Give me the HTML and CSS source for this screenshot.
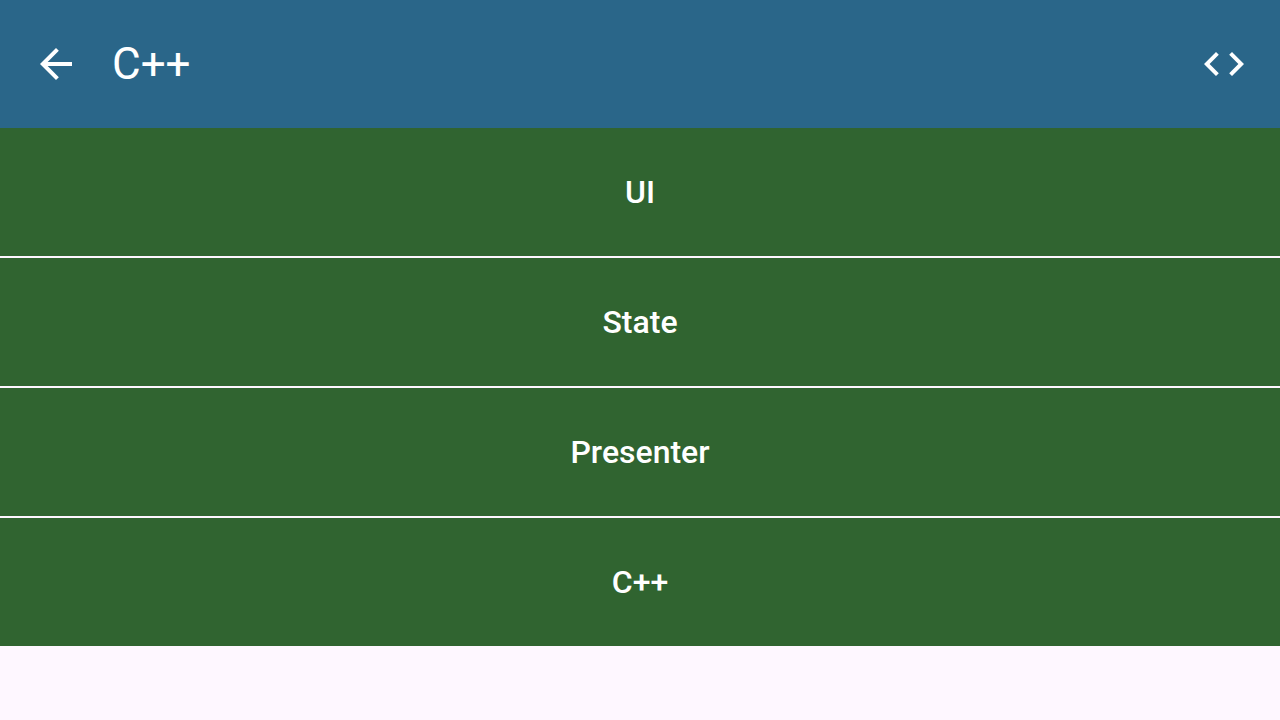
FILE: index.html
```html
<!DOCTYPE html>
<html lang="en">
<head>
<meta charset="utf-8">
<title>C++</title>
<link rel="stylesheet" href="styles.css">
</head>
<body>
<header class="app-bar">
  <button class="icon-button" type="button" aria-label="Back">
    <svg class="icon" viewBox="0 0 24 24"><path d="M20 11H7.83l5.59-5.59L12 4l-8 8 8 8 1.41-1.41L7.83 13H20v-2z"/></svg>
  </button>
  <h1 class="title">C++</h1>
  <button class="icon-button" type="button" aria-label="View code">
    <svg class="icon" viewBox="0 0 24 24"><path d="M9.4 16.6L4.8 12l4.6-4.6L8 6l-6 6 6 6 1.4-1.4zm5.2 0l4.6-4.6-4.6-4.6L16 6l6 6-6 6-1.4-1.4z"/></svg>
  </button>
</header>
<main class="menu">
  <button class="menu-item" type="button">UI</button>
  <button class="menu-item" type="button">State</button>
  <button class="menu-item" type="button">Presenter</button>
  <button class="menu-item" type="button">C++</button>
</main>
</body>
</html>
```
FILE: styles.css
```css
* {
  box-sizing: border-box;
}

body {
  margin: 0;
  background: #fef7ff;
  font-family: Roboto, sans-serif;
}

.app-bar {
  display: flex;
  align-items: center;
  min-height: 128px;
  padding: 16px 8px;
  background: #2a6689;
  color: #ffffff;
}

.icon-button {
  display: flex;
  align-items: center;
  justify-content: center;
  width: 96px;
  height: 96px;
  padding: 0;
  border: 0;
  background: transparent;
  color: inherit;
}

.icon {
  width: 48px;
  height: 48px;
  fill: currentColor;
}

.title {
  flex: 1;
  margin: 0;
  padding-left: 8px;
  font-size: 44px;
  font-weight: 400;
  line-height: 56px;
}

.menu {
  display: flex;
  flex-direction: column;
  gap: 2px;
}

.menu-item {
  min-height: 128px;
  padding: 40px 24px;
  border: 0;
  background: #306430;
  color: #ffffff;
  font-family: inherit;
  font-size: 32px;
  font-weight: 500;
  line-height: 48px;
}
```
